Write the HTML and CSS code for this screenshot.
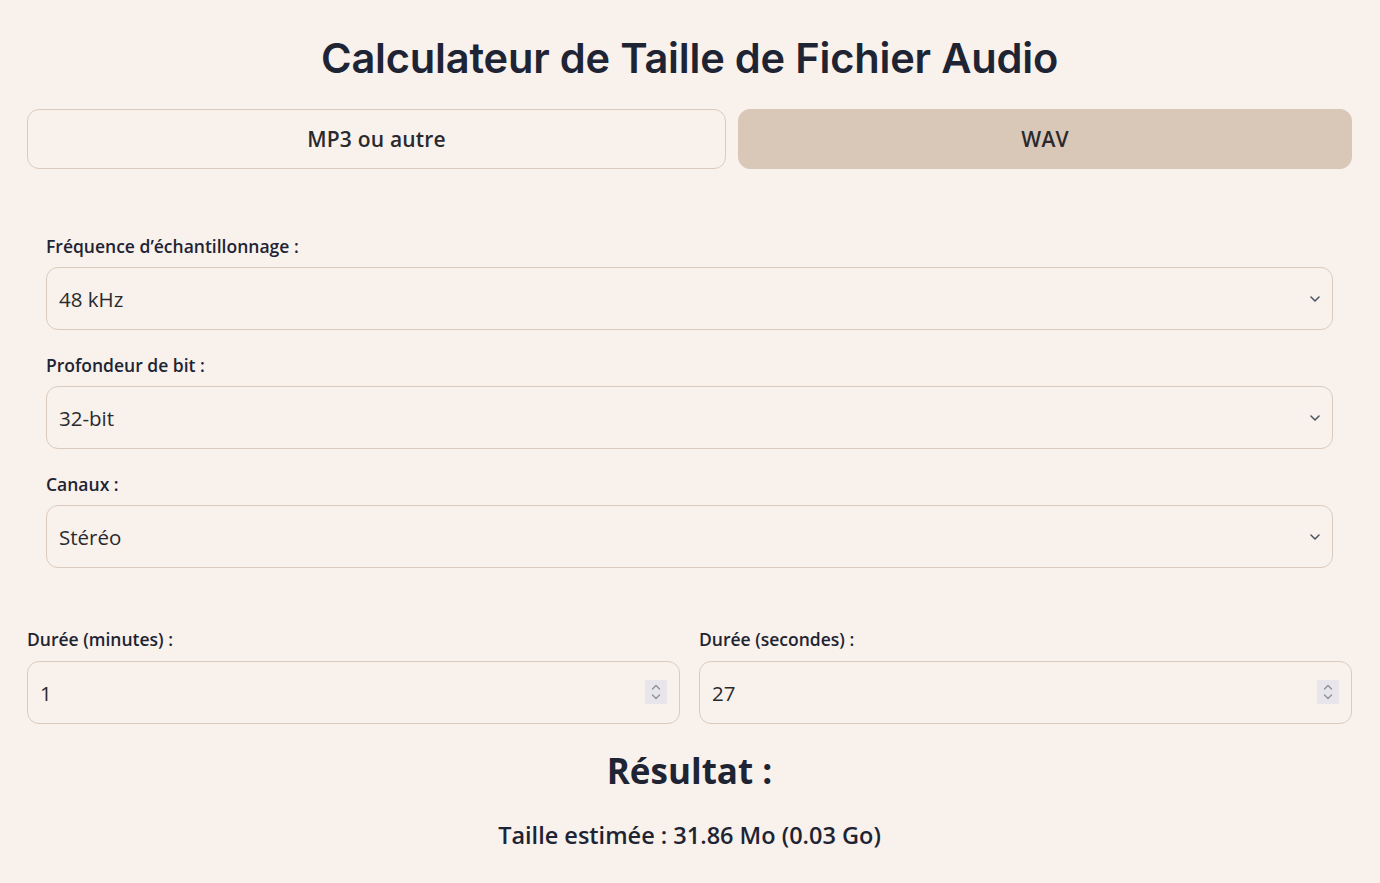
FILE: index.html
```html
<!DOCTYPE html>
<html lang="fr">
<head>
<meta charset="utf-8">
<title>Calculateur de Taille de Fichier Audio</title>
<link rel="stylesheet" href="styles.css">
</head>
<body>
<main class="calc">
  <h1 class="title">Calculateur de Taille de Fichier Audio</h1>
  <div class="tabs">
    <button class="tab tab-mp3">MP3 ou autre</button>
    <button class="tab tab-wav active">WAV</button>
  </div>

  <section class="wav-options">
    <div class="field">
      <label class="label" for="freq">Fréquence d’échantillonnage :</label>
      <div class="select-wrap">
        <select id="freq" class="control">
          <option>44.1 kHz</option>
          <option selected>48 kHz</option>
          <option>96 kHz</option>
        </select>
        <svg class="chevron" width="10" height="6" viewBox="0 0 10 6"><path d="M1 1l4 4 4-4" fill="none" stroke="#4a5160" stroke-width="1.5" stroke-linecap="round" stroke-linejoin="round"/></svg>
      </div>
    </div>
    <div class="field">
      <label class="label" for="bits">Profondeur de bit :</label>
      <div class="select-wrap">
        <select id="bits" class="control">
          <option>16-bit</option>
          <option>24-bit</option>
          <option selected>32-bit</option>
        </select>
        <svg class="chevron" width="10" height="6" viewBox="0 0 10 6"><path d="M1 1l4 4 4-4" fill="none" stroke="#4a5160" stroke-width="1.5" stroke-linecap="round" stroke-linejoin="round"/></svg>
      </div>
    </div>
    <div class="field">
      <label class="label" for="chan">Canaux :</label>
      <div class="select-wrap">
        <select id="chan" class="control">
          <option>Mono</option>
          <option selected>Stéréo</option>
        </select>
        <svg class="chevron" width="10" height="6" viewBox="0 0 10 6"><path d="M1 1l4 4 4-4" fill="none" stroke="#4a5160" stroke-width="1.5" stroke-linecap="round" stroke-linejoin="round"/></svg>
      </div>
    </div>
  </section>

  <div class="duration">
    <div class="field">
      <label class="label" for="min">Durée (minutes) :</label>
      <div class="input-wrap">
        <input id="min" class="control" type="number" value="1">
        <span class="spinner"><svg width="10" height="16" viewBox="0 0 10 16"><path d="M1.5 5l3.5-3.5 3.5 3.5M1.5 11l3.5 3.5 3.5-3.5" fill="none" stroke="#8c93a0" stroke-width="1.4" stroke-linecap="round" stroke-linejoin="round"/></svg></span>
      </div>
    </div>
    <div class="field">
      <label class="label" for="sec">Durée (secondes) :</label>
      <div class="input-wrap">
        <input id="sec" class="control" type="number" value="27">
        <span class="spinner"><svg width="10" height="16" viewBox="0 0 10 16"><path d="M1.5 5l3.5-3.5 3.5 3.5M1.5 11l3.5 3.5 3.5-3.5" fill="none" stroke="#8c93a0" stroke-width="1.4" stroke-linecap="round" stroke-linejoin="round"/></svg></span>
      </div>
    </div>
  </div>

  <section class="result">
    <h2 class="result-title">Résultat :</h2>
    <p class="result-text">Taille estimée : 31.86 Mo (0.03 Go)</p>
  </section>
</main>
</body>
</html>
```

FILE: styles.css
```css
* { box-sizing: border-box; }
html, body {
  margin: 0;
  background: #f8f1ec;
}
body {
  font-family: "Open Sans", "Noto Sans", sans-serif;
  color: #1e2433;
}
.calc {
  padding: 0 28px 0 27px;
}
.title {
  margin: 0;
  padding-top: 33px;
  height: 109px;
  text-align: center;
  font-family: Inter, "Noto Sans", sans-serif;
  font-weight: 600;
  font-size: 41.6px;
  letter-spacing: -0.2px;
  line-height: 50px;
  color: #1e2433;
}
.tabs {
  display: flex;
  gap: 12px;
}
.tab {
  height: 60px;
  border-radius: 12px;
  font-family: "Open Sans", "Noto Sans", sans-serif;
  font-size: 21px;
  font-weight: 600;
  letter-spacing: 0.2px;
  color: #2a2a2e;
  cursor: pointer;
}
.tab-mp3 {
  flex: 700 1 0;
  background: transparent;
  border: 1px solid #dccbbd;
}
.tab-wav {
  flex: 613 1 0;
  background: #d9c7b8;
  border: 1px solid #d9c7b8;
}
.wav-options {
  padding: 66px 19px 0;
  display: flex;
  flex-direction: column;
  gap: 24px;
}
.field {
  display: flex;
  flex-direction: column;
  gap: 10px;
}
.label {
  font-size: 17.5px;
  font-weight: 600;
  line-height: 22px;
  color: #1e2433;
}
.select-wrap,
.input-wrap {
  position: relative;
}
.control {
  display: block;
  height: 63px;
  width: 100%;
  border: 1px solid #dccbbd;
  border-radius: 12px;
  background: #f8f1ec;
  padding: 0 12px;
  font-family: "Open Sans", "Noto Sans", sans-serif;
  font-size: 20.5px;
  color: #2a2a2e;
  outline: none;
}
select.control {
  appearance: none;
  -webkit-appearance: none;
}
.chevron {
  position: absolute;
  right: 13px;
  top: 29px;
  pointer-events: none;
}
input.control {
  -moz-appearance: textfield;
}
input.control::-webkit-inner-spin-button,
input.control::-webkit-outer-spin-button {
  -webkit-appearance: none;
  margin: 0;
}
.spinner {
  position: absolute;
  right: 13px;
  top: 19px;
  width: 22px;
  height: 24px;
  background: #e8e6eb;
  display: flex;
  align-items: center;
  justify-content: center;
  pointer-events: none;
}
.duration {
  display: grid;
  grid-template-columns: 1fr 1fr;
  gap: 19px;
  margin-top: 60px;
}
.duration .field {
  gap: 11px;
}
.result {
  text-align: center;
}
.result-title {
  margin: 27px 0 0;
  font-size: 35px;
  font-weight: 700;
  line-height: 40px;
  color: #1e2433;
}
.result-text {
  margin: 28px 0 0;
  font-size: 23.5px;
  font-weight: 600;
  color: #1e2433;
}
```
